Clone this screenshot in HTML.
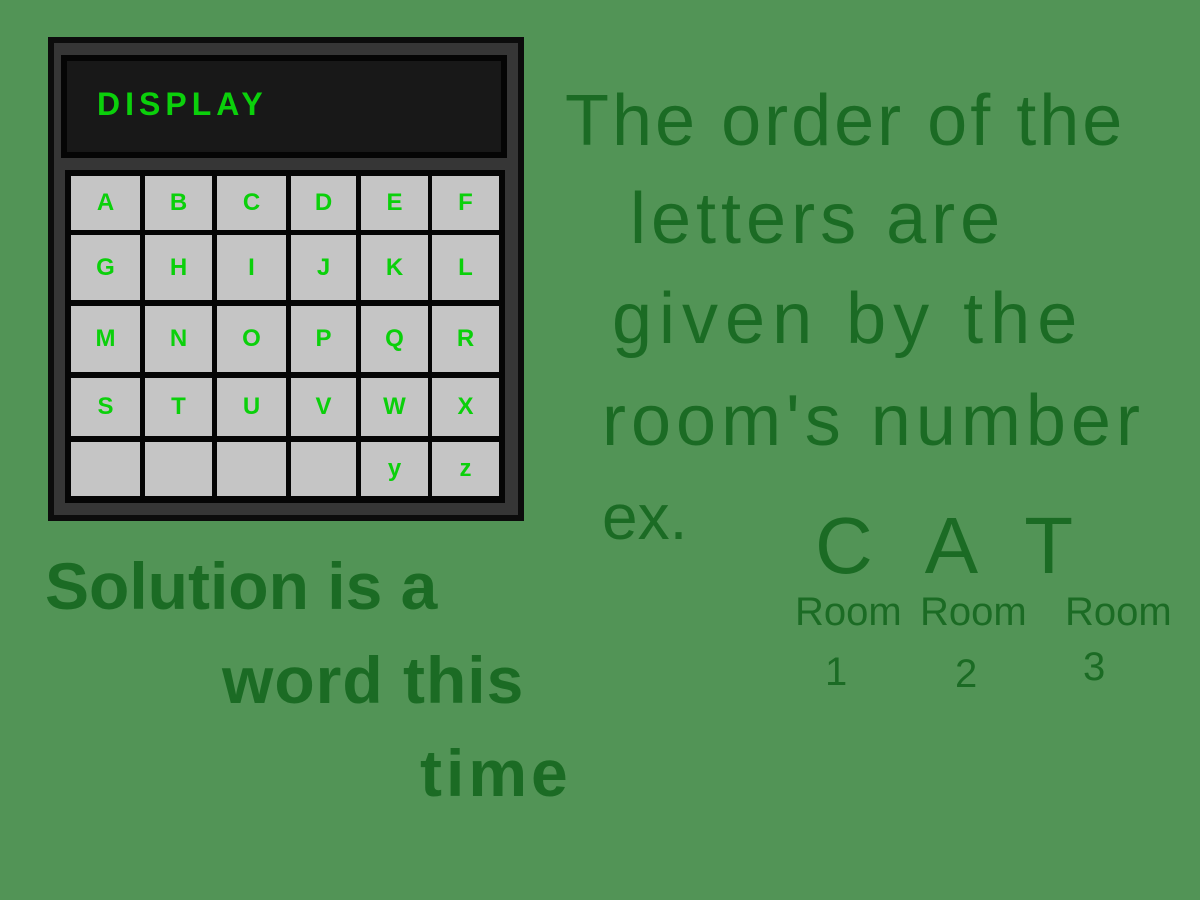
<!DOCTYPE html>
<html><head><style>
body{margin:0;width:1200px;height:900px;background:#529456;position:relative;overflow:hidden;font-family:"Liberation Sans",sans-serif}
.a{position:absolute}
.c{position:absolute;background:#c5c5c5;color:#0bd00b;font-weight:bold;font-size:24px;display:flex;align-items:center;justify-content:center}
.t{position:absolute;color:#1b6b24;white-space:nowrap}
</style></head><body>
<div class="a" style="left:48px;top:37px;width:476px;height:484px;background:#0c0c0c"></div>
<div class="a" style="left:54px;top:43px;width:464px;height:472px;background:#363636"></div>
<div class="a" style="left:61px;top:55px;width:446px;height:103px;background:#050505"></div>
<div class="a" style="left:67px;top:61px;width:434px;height:91px;background:#181818"></div>
<div class="a" style="left:97px;top:86px;color:#0bd00b;font-size:32px;font-weight:bold;letter-spacing:5px">DISPLAY</div>
<div class="a" style="left:65px;top:170px;width:440px;height:333px;background:#050505"></div>
<div id="g"></div>
<script>
var xs=[[71,140],[145,212],[217,286],[291,356],[361,428],[432,499]];
var ys=[[176,230],[235,300],[306,372],[378,436],[442,496]];
var L="ABCDEFGHIJKLMNOPQRSTUVWX";var h="";
for(var r=0;r<5;r++)for(var c=0;c<6;c++){var i=r*6+c;var ch=r<4?L[i]:(c==4?"y":c==5?"z":"");
h+='<div class="c" style="left:'+xs[c][0]+'px;top:'+ys[r][0]+'px;width:'+(xs[c][1]-xs[c][0])+'px;height:'+(ys[r][1]-ys[r][0])+'px">'+ch+'</div>';}
document.getElementById('g').innerHTML=h;
</script>
<div class="t" style="left:565px;top:80px;font-size:72px;letter-spacing:3px">The order of the</div>
<div class="t" style="left:630px;top:178px;font-size:72px;letter-spacing:5px">letters are</div>
<div class="t" style="left:612px;top:278px;font-size:72px;letter-spacing:7px">given by the</div>
<div class="t" style="left:602px;top:380px;font-size:72px;letter-spacing:5px">room's number</div>
<div class="t" style="left:602px;top:480px;font-size:64px">ex.</div>
<div class="t" style="left:815px;top:500px;font-size:80px;letter-spacing:52px">CAT</div>
<div class="t" style="left:795px;top:590px;font-size:40px">Room</div>
<div class="t" style="left:920px;top:590px;font-size:40px">Room</div>
<div class="t" style="left:1065px;top:590px;font-size:40px">Room</div>
<div class="t" style="left:825px;top:650px;font-size:40px">1</div>
<div class="t" style="left:955px;top:652px;font-size:40px">2</div>
<div class="t" style="left:1083px;top:645px;font-size:40px">3</div>
<div class="t" style="left:45px;top:548px;font-size:66px;font-weight:bold;letter-spacing:0px">Solution is a</div>
<div class="t" style="left:222px;top:642px;font-size:66px;font-weight:bold;letter-spacing:1px">word this</div>
<div class="t" style="left:420px;top:735px;font-size:66px;font-weight:bold;letter-spacing:4px">time</div>
</body></html>
